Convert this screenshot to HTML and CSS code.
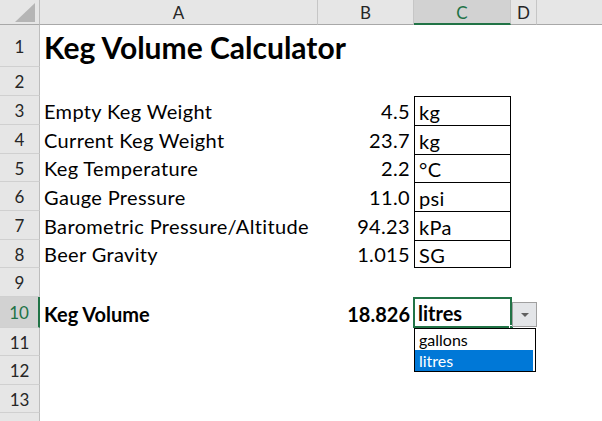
FILE: index.html
```html
<!DOCTYPE html>
<html>
<head>
<meta charset="utf-8">
<link rel="stylesheet" href="styles.css">
</head>
<body>
<div class="sheet">
  <div class="row hdr">
    <div class="corner"><svg width="22" height="21" viewBox="0 0 22 21"><polygon points="21,1 21,20 1,20" fill="#b5b5b5"/></svg></div>
    <div class="ch">A</div>
    <div class="ch">B</div>
    <div class="ch sel">C</div>
    <div class="ch">D</div>
    <div class="ch last"></div>
  </div>
  <div class="row h42"><div class="rh">1</div><div class="c title">Keg Volume Calculator</div><div class="c"></div><div class="c"></div><div class="c"></div><div class="c"></div></div>
  <div class="row h29"><div class="rh">2</div><div class="c"></div><div class="c"></div><div class="c"></div><div class="c"></div><div class="c"></div></div>
  <div class="row h29"><div class="rh">3</div><div class="c">Empty Keg Weight</div><div class="c num">4.5</div><div class="c unit">kg</div><div class="c"></div><div class="c"></div></div>
  <div class="row h29"><div class="rh">4</div><div class="c">Current Keg Weight</div><div class="c num">23.7</div><div class="c unit">kg</div><div class="c"></div><div class="c"></div></div>
  <div class="row h28"><div class="rh">5</div><div class="c">Keg Temperature</div><div class="c num">2.2</div><div class="c unit">°C</div><div class="c"></div><div class="c"></div></div>
  <div class="row h29"><div class="rh">6</div><div class="c">Gauge Pressure</div><div class="c num">11.0</div><div class="c unit">psi</div><div class="c"></div><div class="c"></div></div>
  <div class="row h29"><div class="rh">7</div><div class="c">Barometric Pressure/Altitude</div><div class="c num">94.23</div><div class="c unit">kPa</div><div class="c"></div><div class="c"></div></div>
  <div class="row h28"><div class="rh">8</div><div class="c">Beer Gravity</div><div class="c num">1.015</div><div class="c unit end">SG</div><div class="c"></div><div class="c"></div></div>
  <div class="row h29"><div class="rh">9</div><div class="c"></div><div class="c"></div><div class="c"></div><div class="c"></div><div class="c"></div></div>
  <div class="row h31"><div class="rh selrow">10</div><div class="c bold">Keg Volume</div><div class="c num bold">18.826</div>
    <div class="c active bold">litres
      <span class="handle"></span>
      <div class="ddbtn"><span class="arrow"></span></div>
      <ul class="list">
        <li>gallons</li>
        <li class="hi">litres</li>
      </ul>
    </div>
    <div class="c"></div><div class="c"></div></div>
  <div class="row h28"><div class="rh">11</div><div class="c"></div><div class="c"></div><div class="c"></div><div class="c"></div><div class="c"></div></div>
  <div class="row h29"><div class="rh">12</div><div class="c"></div><div class="c"></div><div class="c"></div><div class="c"></div><div class="c"></div></div>
  <div class="row h28"><div class="rh">13</div><div class="c"></div><div class="c"></div><div class="c"></div><div class="c"></div><div class="c"></div></div>
  <div class="row h29"><div class="rh"></div><div class="c"></div><div class="c"></div><div class="c"></div><div class="c"></div><div class="c"></div></div>
</div>
</body>
</html>
```

FILE: styles.css
```css
html, body {
  margin: 0;
  padding: 0;
  background: #fff;
  overflow: hidden;
}
.sheet {
  width: 602px;
  height: 421px;
  overflow: hidden;
  font-family: "Lato", "Liberation Sans", sans-serif;
  color: #000;
}
.row {
  display: grid;
  grid-template-columns: 40px 278px 96px 97px 26px 1fr;
}
.hdr { height: 25px; background: #e6e6e6; }
.h42 { height: 42px; }
.h31 { height: 31px; }
.h29 { height: 29px; }
.h28 { height: 28px; }

.corner {
  box-sizing: border-box;
  border-right: 1px solid #bdbdbd;
  border-bottom: 1px solid #a8a8a8;
  display: flex;
  align-items: flex-start;
  justify-content: flex-end;
  padding: 2px 3px 0 0;
}
.ch {
  box-sizing: border-box;
  border-right: 1px solid #c6c6c6;
  border-bottom: 1px solid #a8a8a8;
  display: flex;
  align-items: center;
  justify-content: center;
  font-size: 17px;
  color: #262626;
  padding-top: 1px;
}
.ch.last { border-right: none; }
.ch.sel {
  background: #d2d2d2;
  color: #217346;
  border-bottom: 2px solid #217346;
  border-right: 1px solid #c6c6c6;
}
.rh {
  box-sizing: border-box;
  background: #e6e6e6;
  border-right: 1px solid #bdbdbd;
  border-bottom: 1px solid #d0d0d0;
  display: flex;
  align-items: center;
  justify-content: center;
  font-size: 17px;
  color: #262626;
  padding-top: 1px;
}
.rh.selrow {
  background: #d2d2d2;
  color: #217346;
  border-right: 2px solid #217346;
}
.c {
  box-sizing: border-box;
  display: flex;
  align-items: flex-end;
  font-size: 20px;
  letter-spacing: 0.35px;
  line-height: 22px;
  padding: 0 4px 3px 4px;
  white-space: nowrap;
  position: relative;
}
.title {
  font-size: 30px;
  font-weight: 700;
  letter-spacing: 0;
  line-height: 34px;
  padding-bottom: 3px;
}
.num { justify-content: flex-end; padding-right: 4px; }
.unit {
  border: 1px solid #000;
  border-bottom: none;
  padding-left: 4px;
  padding-bottom: 2px;
}
.unit.end { border-bottom: 1px solid #000; padding-bottom: 1px; }
.bold { font-weight: 700; font-size: 20px; letter-spacing: 0; }
.active {
  border: 2px solid #217346;
  padding-left: 3px;
  padding-bottom: 2px;
  margin-left: -1px;
  margin-right: -1px;
}
.handle {
  position: absolute;
  right: -4px;
  bottom: -4px;
  width: 5px;
  height: 5px;
  background: #217346;
  border: 1px solid #fff;
  box-sizing: border-box;
}
.ddbtn {
  position: absolute;
  left: 97px;
  top: 3px;
  width: 25px;
  height: 25px;
  box-sizing: border-box;
  background: #e3e5e8;
  border: 1px solid #a0a0a0;
  display: flex;
  align-items: center;
  justify-content: center;
}
.arrow {
  width: 0;
  height: 0;
  border-left: 4px solid transparent;
  border-right: 4px solid transparent;
  border-top: 4px solid #606060;
}
.list {
  position: absolute;
  left: -1px;
  top: 29px;
  width: 122px;
  height: 44px;
  box-sizing: border-box;
  margin: 0;
  padding: 0 2px 0 0;
  list-style: none;
  background: #fff;
  border: 1px solid #000;
  font-size: 16px;
  font-weight: 400;
  letter-spacing: 0;
  z-index: 2;
}
.list li {
  height: 21px;
  line-height: 21px;
  padding-left: 4px;
}
.list li.hi {
  background: #0078d7;
  color: #fff;
}
```
